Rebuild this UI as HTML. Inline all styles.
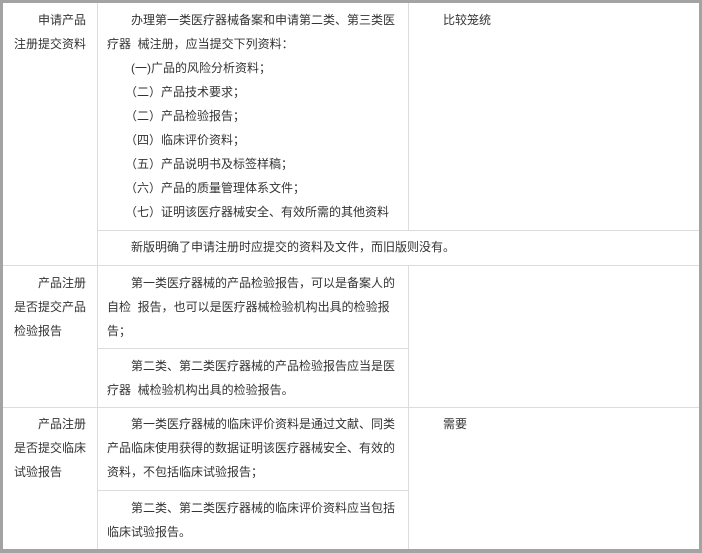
<!DOCTYPE html>
<html><head><meta charset="utf-8"><style>
html,body{margin:0;padding:0;width:702px;height:553px;background:#fff;overflow:hidden}
body{position:relative;font-family:"Liberation Sans","Noto Sans CJK SC","WenQuanYi Zen Hei",sans-serif;font-size:12px;color:#333}
.frame{position:absolute;left:0;top:0;width:696px;height:546px;border:3px solid #a3a3a3;border-bottom-width:4px}
.h{position:absolute;height:1px;background:#dcdcdc}
.v{position:absolute;width:1px;background:#dcdcdc}
.t{position:absolute;line-height:24px;white-space:nowrap}
.c1{left:14px;text-indent:24px}
</style></head><body>
<div class="frame"></div>
<div class="h" style="left:97px;width:602px;top:230px"></div>
<div class="h" style="left:3px;width:696px;top:265px"></div>
<div class="h" style="left:97px;width:311px;top:348px"></div>
<div class="h" style="left:3px;width:696px;top:407px"></div>
<div class="h" style="left:97px;width:311px;top:490px"></div>
<div class="v" style="left:97px;top:3px;height:546px"></div>
<div class="v" style="left:408px;top:3px;height:227px"></div>
<div class="v" style="left:408px;top:265px;height:284px"></div>

<div class="t c1" style="top:8px;width:72px;white-space:normal">申请产品注册提交资料</div>
<div class="t" style="left:107px;top:8px">　　办理第一类医疗器械备案和申请第二类、第三类医<br>疗器&nbsp; 械注册，应当提交下列资料：<br>　　(一)广品的风险分析资料；<br>　　（二）产品技术要求；<br>　　（二）产品检验报告；<br>　　（四）临床评价资料；<br>　　（五）产品说明书及标签样稿；<br>　　（六）产品的质量管理体系文件；<br>　　（七）证明该医疗器械安全、有效所需的其他资料</div>
<div class="t" style="left:419px;top:8px">　　比较笼统</div>
<div class="t" style="left:107px;top:235px">　　新版明确了申请注册时应提交的资料及文件，而旧版则没有。</div>

<div class="t c1" style="top:271px;width:72px;white-space:normal">产品注册是否提交产品检验报告</div>
<div class="t" style="left:107px;top:271px">　　第一类医疗器械的产品检验报告，可以是备案人的<br>自检&nbsp; 报告，也可以是医疗器械检验机构出具的检验报<br>告；</div>
<div class="t" style="left:107px;top:354px">　　第二类、第二类医疗器械的产品检验报告应当是医<br>疗器&nbsp; 械检验机构出具的检验报告。</div>

<div class="t c1" style="top:412px;width:72px;white-space:normal">产品注册是否提交临床试验报告</div>
<div class="t" style="left:107px;top:412px">　　第一类医疗器械的临床评价资料是通过文献、同类<br>产品临床使用获得的数据证明该医疗器械安全、有效的<br>资料，不包括临床试验报告；</div>
<div class="t" style="left:419px;top:412px">　　需要</div>
<div class="t" style="left:107px;top:496px">　　第二类、第二类医疗器械的临床评价资料应当包括<br>临床试验报告。</div>
</body></html>
